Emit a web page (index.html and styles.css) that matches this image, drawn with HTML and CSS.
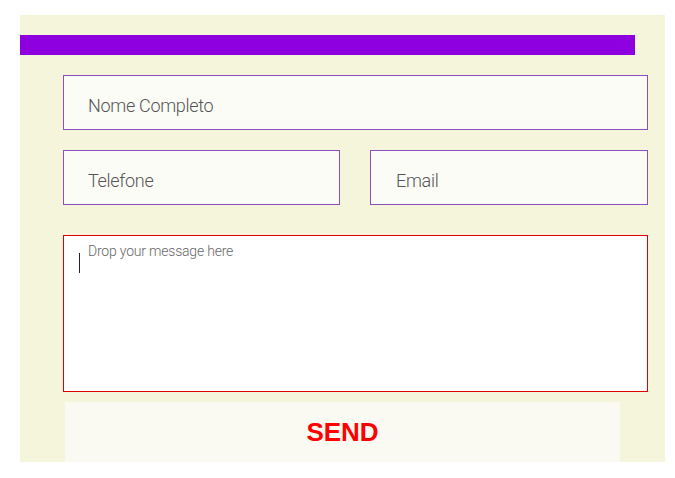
FILE: index.html
```html
<!DOCTYPE html>
<html>
<head>
<meta charset="utf-8">
<link rel="stylesheet" href="styles.css">
</head>
<body>
<div class="panel">
  <div class="bar"></div>
  <form class="form">
    <div class="field full"><span class="ph">Nome Completo</span></div>
    <div class="row">
      <div class="field half"><span class="ph">Telefone</span></div>
      <div class="field half"><span class="ph">Email</span></div>
    </div>
    <div class="message">
      <span class="caret"></span>
      <span class="msg-ph">Drop your message here</span>
    </div>
    <div class="send">SEND</div>
  </form>
</div>
</body>
</html>
```

FILE: styles.css
```css
html, body { margin: 0; padding: 0; background: #fff; }
.panel {
  margin: 15px 0 0 20px;
  width: 645px;
  height: 447px;
  background: #f5f5dc;
  overflow: hidden;
  display: flex;
  flex-direction: column;
}
.bar {
  margin-top: 20px;
  width: 615px;
  height: 20px;
  background: #8e00e0;
}
.form {
  margin: 20px 0 0 43px;
  width: 585px;
  display: flex;
  flex-direction: column;
  font-family: Roboto, "Liberation Sans", sans-serif;
  font-weight: 300;
}
.field {
  box-sizing: border-box;
  height: 55px;
  border: 1px solid #8b4fc0;
  background: #fcfcf7;
  display: flex;
  align-items: center;
  padding-left: 24px;
  padding-top: 6px;
}
.ph { color: #555; font-size: 18px; letter-spacing: -0.3px; }
.row {
  margin-top: 20px;
  display: flex;
  justify-content: space-between;
}
.half:first-child { width: 277px; }
.half:last-child { width: 278px; }
.half:last-child .ph { margin-left: 1px; }
.message {
  position: relative;
  box-sizing: border-box;
  margin-top: 30px;
  height: 157px;
  border: 1px solid #e00000;
  background: #fff;
  padding: 5px 0 0 24px;
}
.msg-ph { color: #666; font-size: 14px; letter-spacing: -0.2px; }
.caret {
  position: absolute;
  left: 15px;
  top: 17px;
  width: 1px;
  height: 20px;
  background: #222;
}
.send {
  margin: 10px 0 0 2px;
  width: 555px;
  height: 60px;
  background: #fafaf3;
  display: flex;
  align-items: center;
  justify-content: center;
  color: #ff0000;
  font-family: "Liberation Sans", Arial, sans-serif;
  font-weight: bold;
  font-size: 26px;
}
```
